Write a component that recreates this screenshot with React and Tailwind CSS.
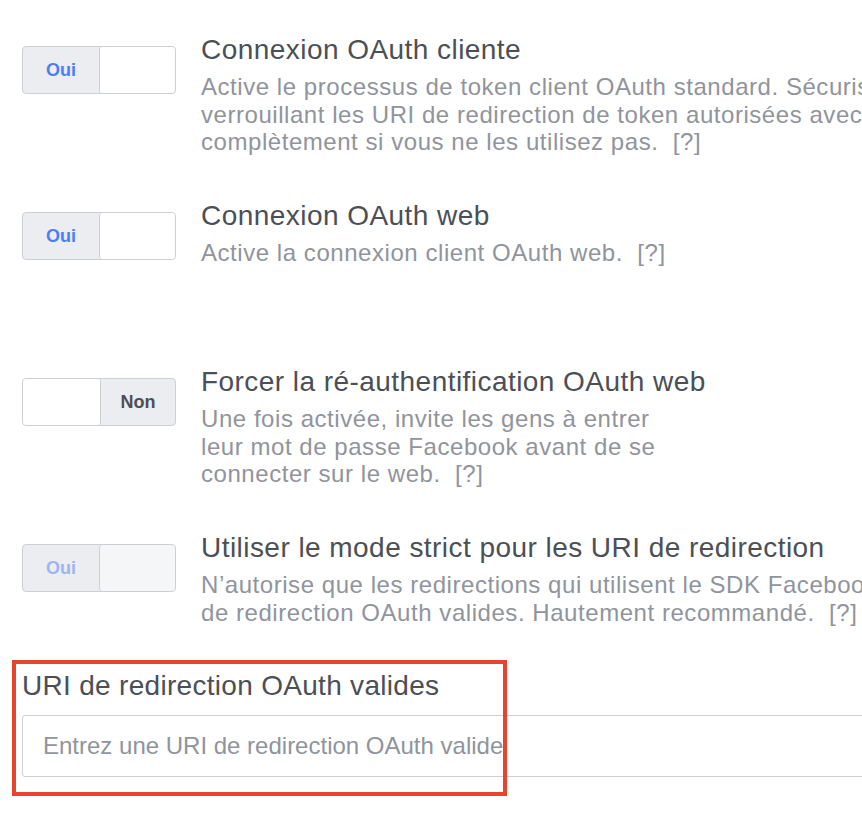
const font = { fontFamily: '"Liberation Sans", Arial, sans-serif' };

const Toggle = ({ on, disabled }) => {
    if (on) {
        return (
            <div className="flex w-[154px] h-[48px] rounded-[4px] border border-[#ccd0d5] bg-[#ebedf0] overflow-hidden shrink-0">
                <div className={`w-[76px] flex items-center justify-center text-[18px] font-bold ${disabled ? 'text-[#9db4f5]' : 'text-[#4a7ef4]'}`}>
                    Oui
                </div>
                <div className={`flex-1 rounded-[3px] border-l border-[#ccd0d5] ${disabled ? 'bg-[#f5f6f7]' : 'bg-white'}`} />
            </div>
        );
    }
    return (
        <div className="flex w-[154px] h-[48px] rounded-[4px] border border-[#ccd0d5] bg-[#ebedf0] overflow-hidden shrink-0">
            <div className="w-[78px] rounded-[3px] border-r border-[#ccd0d5] bg-white" />
            <div className="flex-1 flex items-center justify-center text-[18px] font-bold text-[#4b4f56]">
                Non
            </div>
        </div>
    );
};

const SettingRow = ({ on, disabled, title, lines, fixed }) => (
    <div className={`flex items-start ${fixed ? 'h-[166px]' : ''}`}>
        <div className="pl-[22px] pt-[12px] w-[201px] shrink-0">
            <Toggle on={on} disabled={disabled} />
        </div>
        <div className="whitespace-nowrap">
            <div className="text-[28px] leading-[32px] tracking-[0.45px] text-[#4b4f56]">{title}</div>
            <div className="mt-[7px] text-[24px] leading-[27.5px] tracking-[0.55px] text-[#90949c]">
                {lines.map((l, i) => (
                    <div key={i}>{l}</div>
                ))}
            </div>
        </div>
    </div>
);

export default function App() {
    return (
        <div className="w-[862px] h-[826px] bg-white overflow-hidden pt-[34px]" style={font}>
            <SettingRow
                fixed
                on
                title="Connexion OAuth cliente"
                lines={[
                    'Active le processus de token client OAuth standard. Sécurisez votre application en',
                    'verrouillant les URI de redirection de token autorisées avec les options ci-dessous.',
                    'complètement si vous ne les utilisez pas.\u00a0 [?]',
                ]}
            />
            <SettingRow
                fixed
                on
                title="Connexion OAuth web"
                lines={['Active la connexion client OAuth web.\u00a0 [?]']}
            />
            <SettingRow
                fixed
                on={false}
                title="Forcer la ré-authentification OAuth web"
                lines={[
                    'Une fois activée, invite les gens à entrer',
                    'leur mot de passe Facebook avant de se',
                    'connecter sur le web.\u00a0 [?]',
                ]}
            />
            <SettingRow
                on
                disabled
                title="Utiliser le mode strict pour les URI de redirection"
                lines={[
                    'N’autorise que les redirections qui utilisent le SDK Facebook ou',
                    'de redirection OAuth valides. Hautement recommandé.\u00a0 [?]',
                ]}
            />

            <div className="relative mt-[44px]">
                <div className="pl-[22px] text-[28px] leading-[32px] tracking-[0.3px] text-[#4b4f56] whitespace-nowrap">
                    URI de redirection OAuth valides
                </div>
                <div className="ml-[22px] mt-[13px] w-[900px] h-[62px] rounded-[3px] border border-[#ccd0d5] flex items-center pl-[20px] text-[24px] text-[#90949c] whitespace-nowrap">
                    Entrez une URI de redirection OAuth valide
                </div>
                <div className="absolute left-[12px] top-[-10px] w-[495px] h-[136px] border-[4px] border-[#e8442b] pointer-events-none" />
            </div>
        </div>
    );
}
